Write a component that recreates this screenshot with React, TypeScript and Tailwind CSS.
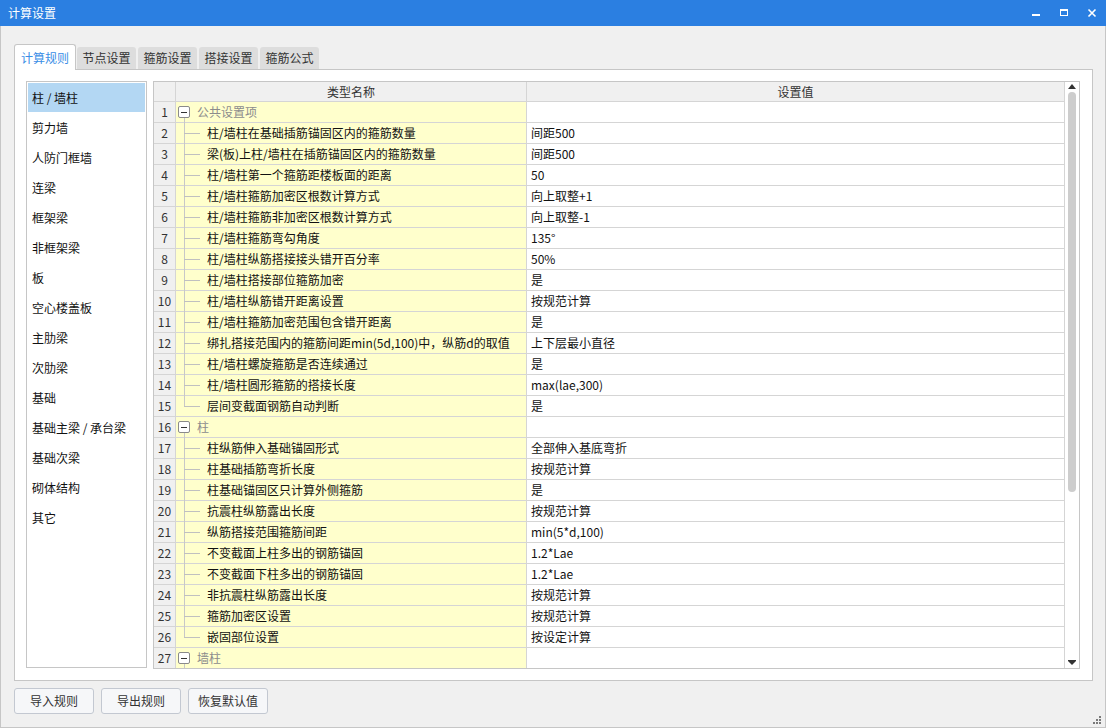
import React from "react";

type Row = { g?: boolean; n: string; v?: string; last?: boolean };

const rows: Row[] = [
  { g: true, n: "公共设置项" },
  { n: "柱/墙柱在基础插筋锚固区内的箍筋数量", v: "间距500" },
  { n: "梁(板)上柱/墙柱在插筋锚固区内的箍筋数量", v: "间距500" },
  { n: "柱/墙柱第一个箍筋距楼板面的距离", v: "50" },
  { n: "柱/墙柱箍筋加密区根数计算方式", v: "向上取整+1" },
  { n: "柱/墙柱箍筋非加密区根数计算方式", v: "向上取整-1" },
  { n: "柱/墙柱箍筋弯勾角度", v: "135°" },
  { n: "柱/墙柱纵筋搭接接头错开百分率", v: "50%" },
  { n: "柱/墙柱搭接部位箍筋加密", v: "是" },
  { n: "柱/墙柱纵筋错开距离设置", v: "按规范计算" },
  { n: "柱/墙柱箍筋加密范围包含错开距离", v: "是" },
  { n: "绑扎搭接范围内的箍筋间距min(5d,100)中，纵筋d的取值", v: "上下层最小直径" },
  { n: "柱/墙柱螺旋箍筋是否连续通过", v: "是" },
  { n: "柱/墙柱圆形箍筋的搭接长度", v: "max(lae,300)" },
  { n: "层间变截面钢筋自动判断", v: "是", last: true },
  { g: true, n: "柱" },
  { n: "柱纵筋伸入基础锚固形式", v: "全部伸入基底弯折" },
  { n: "柱基础插筋弯折长度", v: "按规范计算" },
  { n: "柱基础锚固区只计算外侧箍筋", v: "是" },
  { n: "抗震柱纵筋露出长度", v: "按规范计算" },
  { n: "纵筋搭接范围箍筋间距", v: "min(5*d,100)" },
  { n: "不变截面上柱多出的钢筋锚固", v: "1.2*Lae" },
  { n: "不变截面下柱多出的钢筋锚固", v: "1.2*Lae" },
  { n: "非抗震柱纵筋露出长度", v: "按规范计算" },
  { n: "箍筋加密区设置", v: "按规范计算" },
  { n: "嵌固部位设置", v: "按设定计算", last: true },
  { g: true, n: "墙柱" },
];

const cats = [
  "柱 / 墙柱",
  "剪力墙",
  "人防门框墙",
  "连梁",
  "框架梁",
  "非框架梁",
  "板",
  "空心楼盖板",
  "主肋梁",
  "次肋梁",
  "基础",
  "基础主梁 / 承台梁",
  "基础次梁",
  "砌体结构",
  "其它",
];

const tabs = ["节点设置", "箍筋设置", "搭接设置", "箍筋公式"];

function NameCell({ r }: { r: Row }) {
  if (r.g) {
    return (
      <div className="relative w-[351px] shrink-0 border-r border-[#d5d5d5] bg-[#ffffcc] h-full">
        <span className="absolute left-[2px] top-[4px] w-[12px] h-[12px] border border-[#8a8a8a] rounded-[2px] bg-white flex items-center justify-center">
          <span className="block w-[6px] h-px bg-[#333]" />
        </span>
        <span className="absolute left-[8px] top-[16px] bottom-0 w-px bg-[#c8c8c8]" />
        <span className="block pl-[21px] text-[#8c8c8c] leading-[20px]">{r.n}</span>
      </div>
    );
  }
  return (
    <div className="relative w-[351px] shrink-0 border-r border-[#d5d5d5] bg-[#ffffcc] h-full">
      <span
        className={
          r.last
            ? "absolute left-[8px] top-[-1px] h-[11px] w-px bg-[#c8c8c8]"
            : "absolute left-[8px] top-[-1px] bottom-[-1px] w-px bg-[#c8c8c8]"
        }
      />
      <span className="absolute left-[8px] top-[10px] w-[16px] h-px bg-[#c0c0c0]" />
      <span className="block pl-[31px] text-[#111] leading-[20px] whitespace-nowrap">{r.n}</span>
    </div>
  );
}

export default function App() {
  return (
    <div className="w-[1106px] h-[728px] flex flex-col bg-[#f0f0f0] text-[12px] text-[#111] [font-family:'Noto_Sans_CJK_SC','Noto_Sans',sans-serif] overflow-hidden">
      {/* Title bar */}
      <div className="h-[26px] shrink-0 bg-[#2b7fe1] flex items-center">
        <span className="pl-[8px] text-white text-[12px] leading-[26px] flex-1">计算设置</span>
        <div className="flex h-full">
          <div className="w-[28px] h-full flex items-center justify-center">
            <svg width="10" height="10" viewBox="0 0 10 10">
              <rect x="1" y="6" width="8" height="2" fill="#fff" />
            </svg>
          </div>
          <div className="w-[28px] h-full flex items-center justify-center">
            <svg width="10" height="10" viewBox="0 0 10 10">
              <rect x="1.5" y="1.5" width="7" height="6" fill="none" stroke="#fff" strokeWidth="1" />
              <rect x="1" y="1" width="8" height="2" fill="#fff" />
            </svg>
          </div>
          <div className="w-[28px] h-full flex items-center justify-center">
            <svg width="10" height="10" viewBox="0 0 10 10">
              <path d="M1.5 1.5 L8.5 8.5 M8.5 1.5 L1.5 8.5" stroke="#fff" strokeWidth="1.6" />
            </svg>
          </div>
        </div>
      </div>

      {/* Body */}
      <div className="relative flex-1 flex flex-col border-x border-b border-[#c6c6c6] pl-[13px] pt-[18px]">
        {/* Tabs */}
        <div className="relative z-10 flex items-end h-[25px]">
          <div className="h-[26px] mb-[-1px] w-[62px] bg-white border border-b-0 border-[#c6c6c6] rounded-t-[3px] flex items-center justify-center text-[#3a8ee6] leading-[20px]">
            计算规则
          </div>
          <div className="flex items-end gap-[2px] ml-[1px]">
            {tabs.map((t) => (
              <div
                key={t}
                className="h-[22px] w-[59px] bg-[#dddddd] rounded-t-[3px] flex items-center justify-center text-[#333] leading-[20px]"
              >
                {t}
              </div>
            ))}
          </div>
        </div>

        {/* Panel */}
        <div className="w-[1079px] h-[612px] bg-white border border-[#c6c6c6] pt-[11px] pl-[11px] flex gap-[6px]">
          {/* Left list */}
          <div className="w-[121px] h-[587px] border border-[#c6c6c6] p-px flex flex-col">
            {cats.map((c, i) => (
              <div
                key={c}
                className={
                  i === 0
                    ? "h-[29px] mb-[1px] bg-[#b3d7f3] pl-[4px] flex items-center leading-[20px]"
                    : "h-[30px] pl-[4px] flex items-center leading-[20px]"
                }
              >
                {c}
              </div>
            ))}
          </div>

          {/* Table */}
          <div className="w-[927px] h-[588px] border border-[#c6c6c6] flex overflow-hidden">
            <div className="flex-1 flex flex-col overflow-hidden">
              <div className="flex h-[20px] shrink-0 border-b border-[#d5d5d5] bg-[#f0f0f0] text-[#333]">
                <div className="w-[22px] shrink-0 border-r border-[#d5d5d5]" />
                <div className="w-[351px] shrink-0 border-r border-[#d5d5d5] flex items-center justify-center leading-[19px]">
                  类型名称
                </div>
                <div className="flex-1 flex items-center justify-center leading-[19px]">设置值</div>
              </div>
              {rows.map((r, i) => (
                <div key={i} className="flex h-[21px] shrink-0 border-b border-[#d5d5d5]">
                  <div className="w-[22px] shrink-0 border-r border-[#d5d5d5] bg-[#f0f0f0] flex items-center justify-center text-[#333] leading-[20px]">
                    {i + 1}
                  </div>
                  <NameCell r={r} />
                  <div className="flex-1 pl-[4px] flex items-center leading-[20px] whitespace-nowrap">{r.v ?? ""}</div>
                </div>
              ))}
            </div>
            {/* Scrollbar */}
            <div className="w-[15px] shrink-0 border-l border-[#d5d5d5] bg-white flex flex-col items-center">
              <div className="mt-[2px] w-0 h-0 border-x-[4px] border-x-transparent border-b-[5px] border-b-[#333]" />
              <div className="mt-[3px] w-[8px] h-[400px] rounded-[4px] bg-[#cdcdcd]" />
              <div className="flex-1" />
              <div className="mb-[3px] flex flex-col items-center">
                <div className="w-[8px] h-px bg-[#333]" />
                <div className="w-0 h-0 border-x-[4px] border-x-transparent border-t-[4px] border-t-[#333]" />
              </div>
            </div>
          </div>
        </div>

        {/* Buttons */}
        <div className="mt-[7px] flex gap-[7px]">
          {["导入规则", "导出规则", "恢复默认值"].map((b) => (
            <div
              key={b}
              className="w-[80px] h-[26px] rounded-[3px] border border-[#c3c8d1] bg-[#f6f7f9] flex items-center justify-center text-[#333] leading-[20px]"
            >
              {b}
            </div>
          ))}
        </div>

        {/* Resize grip */}
        <svg className="absolute right-[3px] bottom-[2px]" width="9" height="9" viewBox="0 0 9 9">
          <rect x="6" y="0" width="2" height="2" fill="#7a7a7a" />
          <rect x="3" y="3" width="2" height="2" fill="#7a7a7a" />
          <rect x="6" y="3" width="2" height="2" fill="#7a7a7a" />
          <rect x="0" y="6" width="2" height="2" fill="#7a7a7a" />
          <rect x="3" y="6" width="2" height="2" fill="#7a7a7a" />
          <rect x="6" y="6" width="2" height="2" fill="#7a7a7a" />
        </svg>
      </div>
    </div>
  );
}
